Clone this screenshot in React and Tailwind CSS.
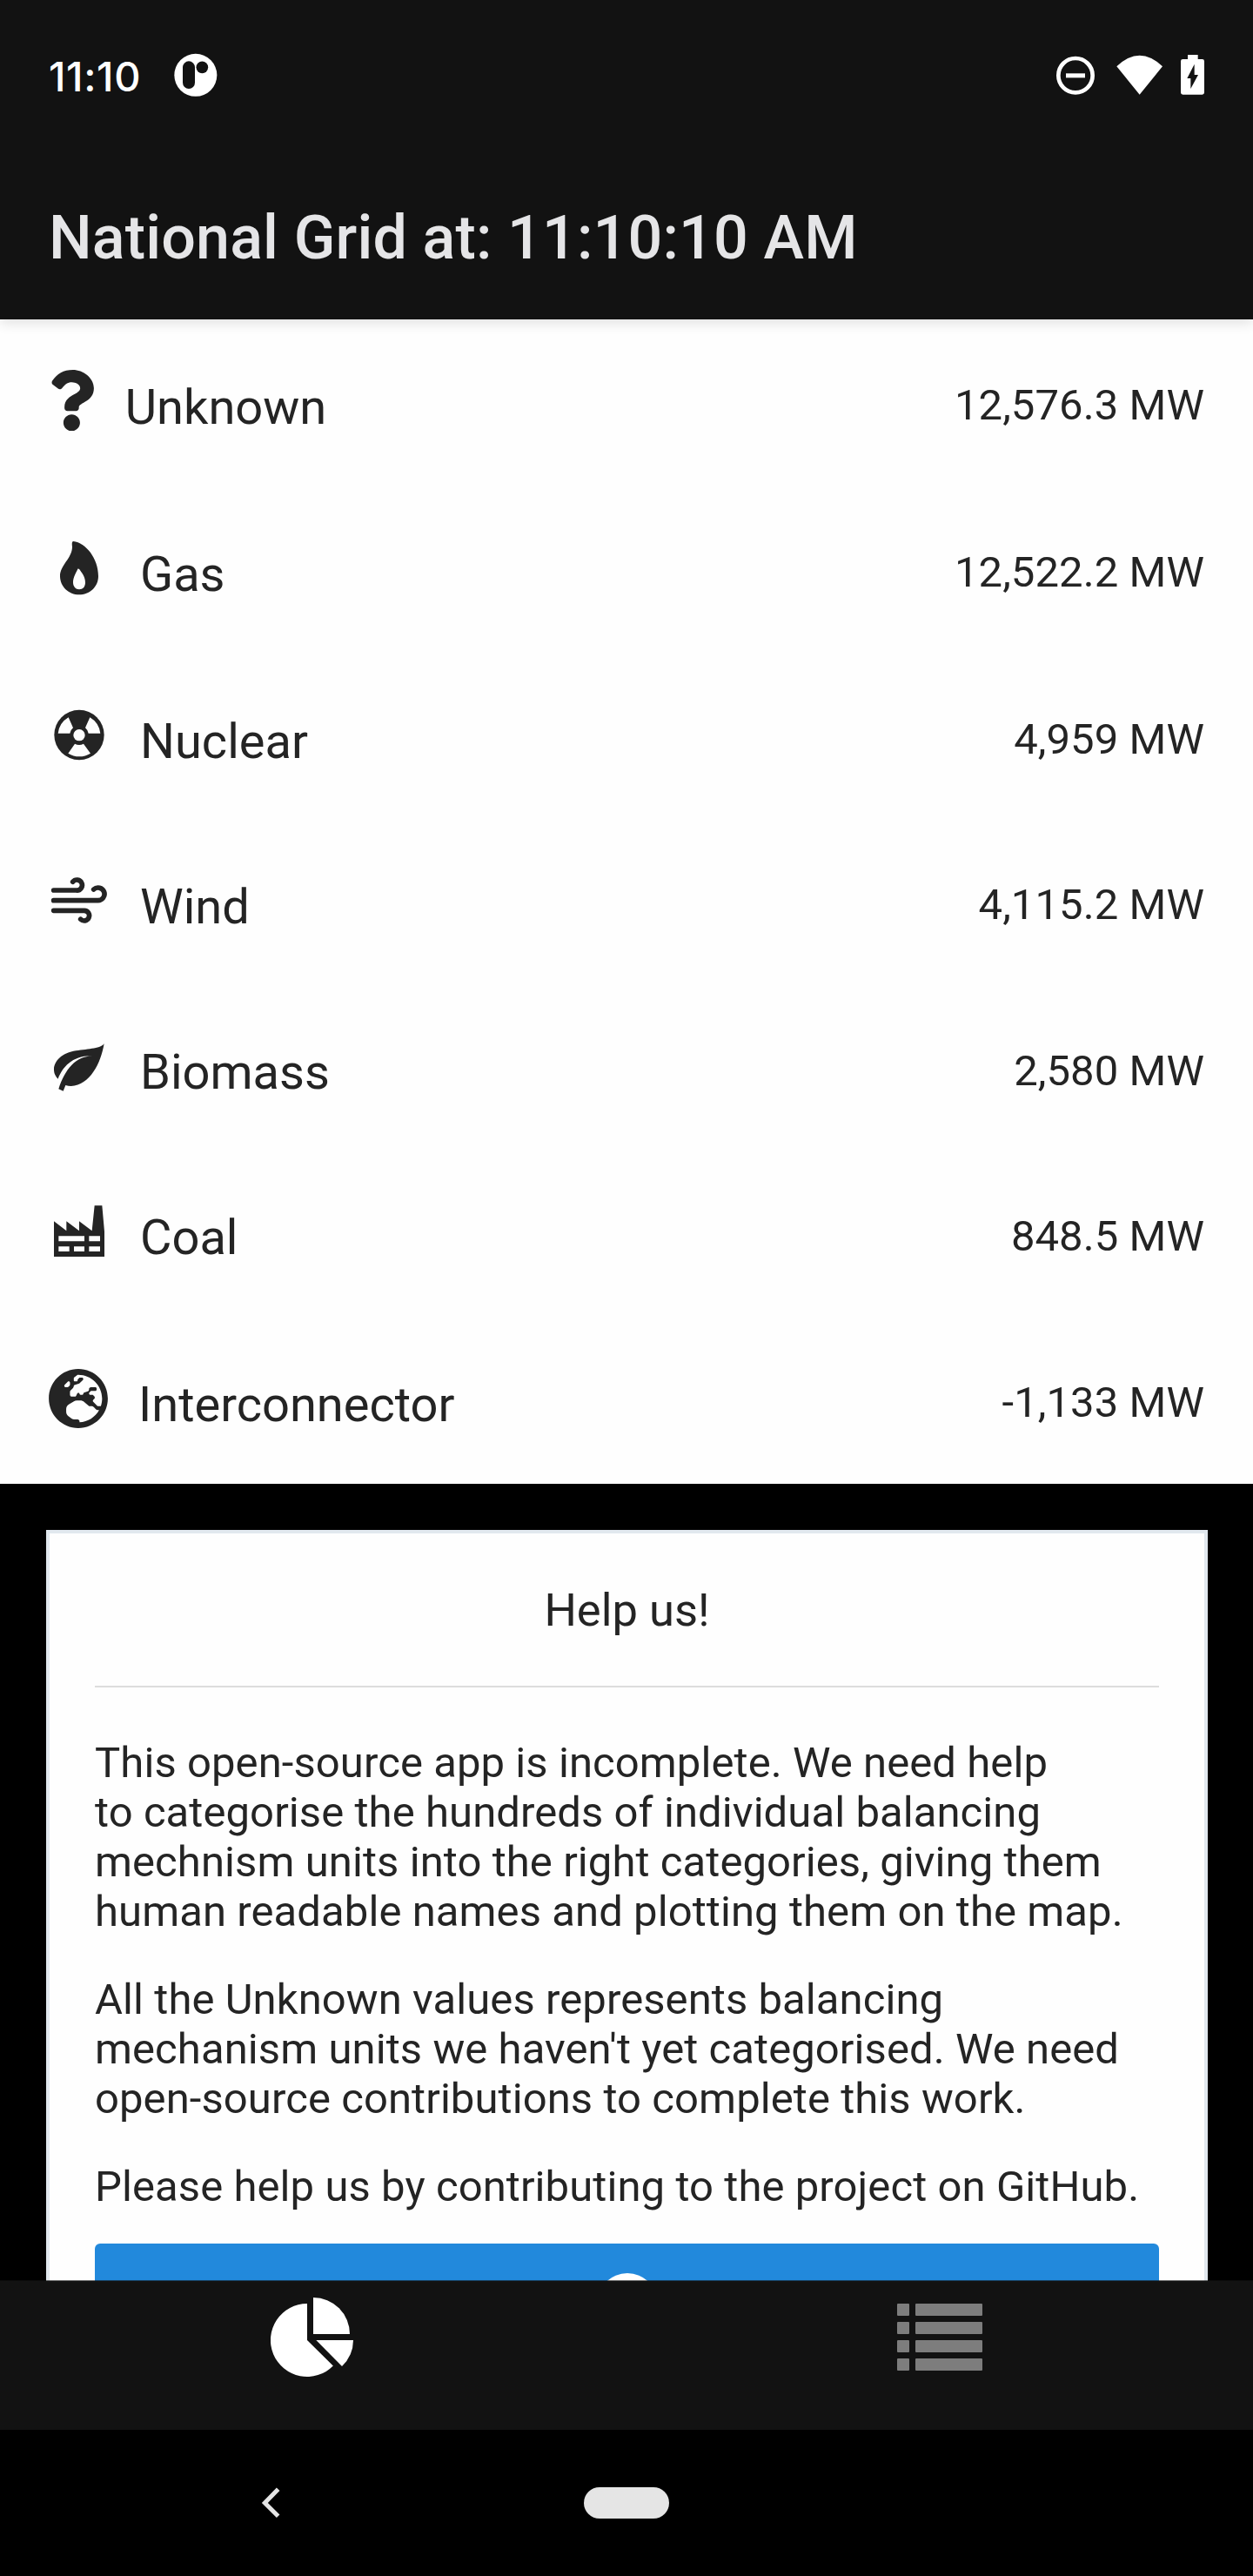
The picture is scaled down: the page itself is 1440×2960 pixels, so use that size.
import { FaQuestion, FaGlobeEurope } from 'react-icons/fa';

const FlameIcon = (props) => (
  <svg viewBox="48 60 204 204" fill="currentColor" fillRule="evenodd" {...props}>
    <path d="M133 66C175 70 219 125 219 186C219 224 188 250 153 250C117 250 87 222 87 186C87 148 129 125 129 85C129 78 126 67 133 66ZM148 161C144 172 132 188 132 208C132 222 141 232 153 232C166 232 174 223 174 208C174 188 160 172 154 163C152 160 149 160 148 161Z" />
  </svg>
);

const NuclearIcon = (props) => (
  <svg viewBox="48 630 204 204" {...props}>
    <circle cx="153" cy="733.5" r="86" fill="currentColor" />
    <g fill="#fefefe">
      <circle cx="153" cy="734" r="20" />
      <path d="M80 728.500A74 74 0 0 1 116 673L132 709A32 32 0 0 0 121 728.500Z" />
      <path d="M226 728.500A74 74 0 0 0 190 673L174 709A32 32 0 0 1 185 728.500Z" />
      <path d="M115 797A74 74 0 0 0 192 797L168 764A32 32 0 0 1 138 764Z" />
    </g>
  </svg>
);

const WindIcon = (props) => (
  <svg viewBox="48 1200 204 204" fill="none" stroke="currentColor" strokeWidth="17" strokeLinecap="round" {...props}>
    <path d="M65 1269H143A18 18 0 1 0 131 1240" />
    <path d="M65 1304H217A22 22 0 1 0 203 1266" />
    <path d="M65 1339H171A17.500 17.500 0 1 1 158 1369" />
  </svg>
);

const LeafIcon = (props) => (
  <svg viewBox="48 36 204 204" fill="currentColor" {...props}>
    <path d="M239 57C232 73 185 76 142 82C95 89 66 117 66 147C66 162 73 172 80 179C96 138 130 98 198 100C140 102 105 145 82 214L98 221L106 201C112 203 118 204 125 204C190 201 228 125 239 57Z" />
  </svg>
);

const FactoryIcon = (props) => (
  <svg viewBox="48 600 204 204" fill="currentColor" fillRule="evenodd" {...props}>
    <path d="M66 670L109 703V670L153 703V670L197 703L206 616H232L240 705V792H66ZM82 721V739H171V721ZM187 721V739H225V721ZM82 757V774H119V757ZM135 757V774H171V757ZM187 757V774H225V757Z" />
  </svg>
);

const sources = [
  { name: 'Unknown', value: '12,576.3 MW', Icon: FaQuestion, row: 'h-[192px]', icon: 'mt-[58px] h-[70.4px] w-[52.8px]', label: 'mt-[69px] ml-[35px]' },
  { name: 'Gas', value: '12,522.2 MW', Icon: FlameIcon, row: 'h-[192px]', icon: 'mt-[61px] size-[68px]', label: 'mt-[69px] ml-[37px]' },
  { name: 'Nuclear', value: '4,959 MW', Icon: NuclearIcon, row: 'h-[190px]', icon: 'mt-[59px] size-[68px]', label: 'mt-[69px] ml-[37px]' },
  { name: 'Wind', value: '4,115.2 MW', Icon: WindIcon, row: 'h-[191px]', icon: 'mt-[59px] size-[68px]', label: 'mt-[69px] ml-[37px]' },
  { name: 'Biomass', value: '2,580 MW', Icon: LeafIcon, row: 'h-[190px]', icon: 'mt-[60px] size-[68px]', label: 'mt-[68px] ml-[37px]' },
  { name: 'Coal', value: '848.5 MW', Icon: FactoryIcon, row: 'h-[191px]', icon: 'mt-[58px] size-[68px]', label: 'mt-[68px] ml-[37px]' },
  { name: 'Interconnector', value: '-1,133 MW', Icon: FaGlobeEurope, row: 'h-[192px]', icon: 'mt-[59px] h-[70px] w-[68px]', label: 'mt-[69px] ml-[35px]' },
];

function StatusBar() {
  return (
    <div className="flex h-[172px] items-center pl-[56px] pr-[55px] text-white">
      <span className="mt-[2px] w-[144px] font-['Inter'] text-[47px] font-medium leading-none tracking-[0.6px]">11:10</span>
      <svg className="size-[50px]" viewBox="599 180 150 150">
        <circle cx="673.500" cy="256" r="73.500" fill="#fff" />
        <rect x="629" y="208" width="42" height="95" rx="21" fill="#121212" />
        <circle cx="696" cy="229" r="20.500" fill="#121212" />
      </svg>
      <svg className="ml-auto h-[50px] w-[172px]" viewBox="219 180 516 150" fill="#fff">
        <circle cx="288" cy="257" r="59" fill="none" stroke="#fff" strokeWidth="14" />
        <rect x="255" y="250" width="66" height="15" />
        <path d="M430 226Q509 151 588 226L509 323Z" />
        <path fillRule="evenodd" d="M675 186H710V201H725Q732 201 732 208V316Q732 323 725 323H658Q651 323 651 316V208Q651 201 658 201H675ZM698 218L673 267H685V303L711 255H698Z" />
      </svg>
    </div>
  );
}

function SourceRow({ source }) {
  const { Icon } = source;
  return (
    <li className={`flex items-start justify-between pl-14 pr-[56px] ${source.row}`}>
      <div className="flex items-start">
        <Icon className={source.icon} />
        <span className={`text-[56px] leading-[64px] ${source.label}`}>{source.name}</span>
      </div>
      <span className="mt-[67px] text-[49px] leading-[64px] tracking-[0.08px]">{source.value}</span>
    </li>
  );
}

function HelpCard() {
  return (
    <section className="ml-[53px] mr-[52px] mt-[53px] h-[1200px] border-4 border-[#e1e8ee] bg-[#fefefe] px-[52px]">
      <h2 className="mt-[57px] text-center text-[52.5px] leading-[63px]">Help us!</h2>
      <hr className="mt-[55px] border-t-2 border-[#dddddd]" />
      <div className="mt-[58px] flex flex-col gap-[44px] whitespace-nowrap text-[49px] leading-[57px] tracking-[0.08px]">
        <p>
          This open-source app is incomplete. We need help
          <br />
          to categorise the hundreds of individual balancing
          <br />
          mechnism units into the right categories, giving them
          <br />
          human readable names and plotting them on the map.
        </p>
        <p>
          All the Unknown values represents balancing
          <br />
          mechanism units we haven't yet categorised. We need
          <br />
          open-source contributions to complete this work.
        </p>
        <p>Please help us by contributing to the project on GitHub.</p>
      </div>
      <button className="mt-[37px] flex h-[140px] w-full justify-center rounded-[6px] bg-[#2289dc] pt-[34px]">
        <span className="size-[70px] rounded-full bg-white" />
      </button>
    </section>
  );
}

export default function App() {
  return (
    <div className="flex h-[2960px] w-[1440px] flex-col overflow-hidden bg-black font-['Roboto',sans-serif] text-[#242424]">
      <header className="relative z-10 h-[367px] shrink-0 bg-[#121212] shadow-[0_4px_14px_rgba(0,0,0,0.12)]">
        <StatusBar />
        <h1 className="mt-[61px] pl-14 text-[70px] font-medium leading-[80px] tracking-[0.16px] text-[#e5e5e7]">National Grid at: 11:10:10 AM</h1>
      </header>
      <main className="h-[2254px] shrink-0 overflow-hidden">
        <ul className="bg-[#fefefe]">
          {sources.map((source) => (
            <SourceRow key={source.name} source={source} />
          ))}
        </ul>
        <HelpCard />
      </main>
      <nav className="relative -mt-px grid h-[172px] shrink-0 grid-cols-2 border-t border-[#121212]/60 bg-[#121212] bg-clip-padding pt-[18px]">
        <svg className="ml-[311px] h-[93px] w-[96px]" viewBox="33 237 288 279" fill="#fff">
          <path d="M159 387V261A126 126 0 1 0 248.500 475.500Z" />
          <path d="M180 240A126 126 0 0 1 306 366H180Z" />
          <path d="M190 387H318A126 126 0 0 1 279 477Z" />
        </svg>
        <div className="ml-[311px] mt-2 flex flex-col gap-[7px]">
          {[0, 1, 2, 3].map((i) => (
            <div key={i} className="flex gap-[7px]">
              <span className="h-[14px] w-[14px] rounded-[1px] bg-[#7d7d7d]" />
              <span className="h-[14px] w-[77px] rounded-[1px] bg-[#7d7d7d]" />
            </div>
          ))}
        </div>
      </nav>
      <footer className="flex h-[168px] items-center bg-black pl-[300px]">
        <svg className="h-[36px] w-[24px]" viewBox="0 894 72 108" fill="none" stroke="#e5e5e5" strokeWidth="15">
          <path d="M59 901L13 948L59 994" />
        </svg>
        <span className="ml-[347px] h-[36px] w-[98px] rounded-full bg-[#e5e5e5]" />
      </footer>
    </div>
  );
}
